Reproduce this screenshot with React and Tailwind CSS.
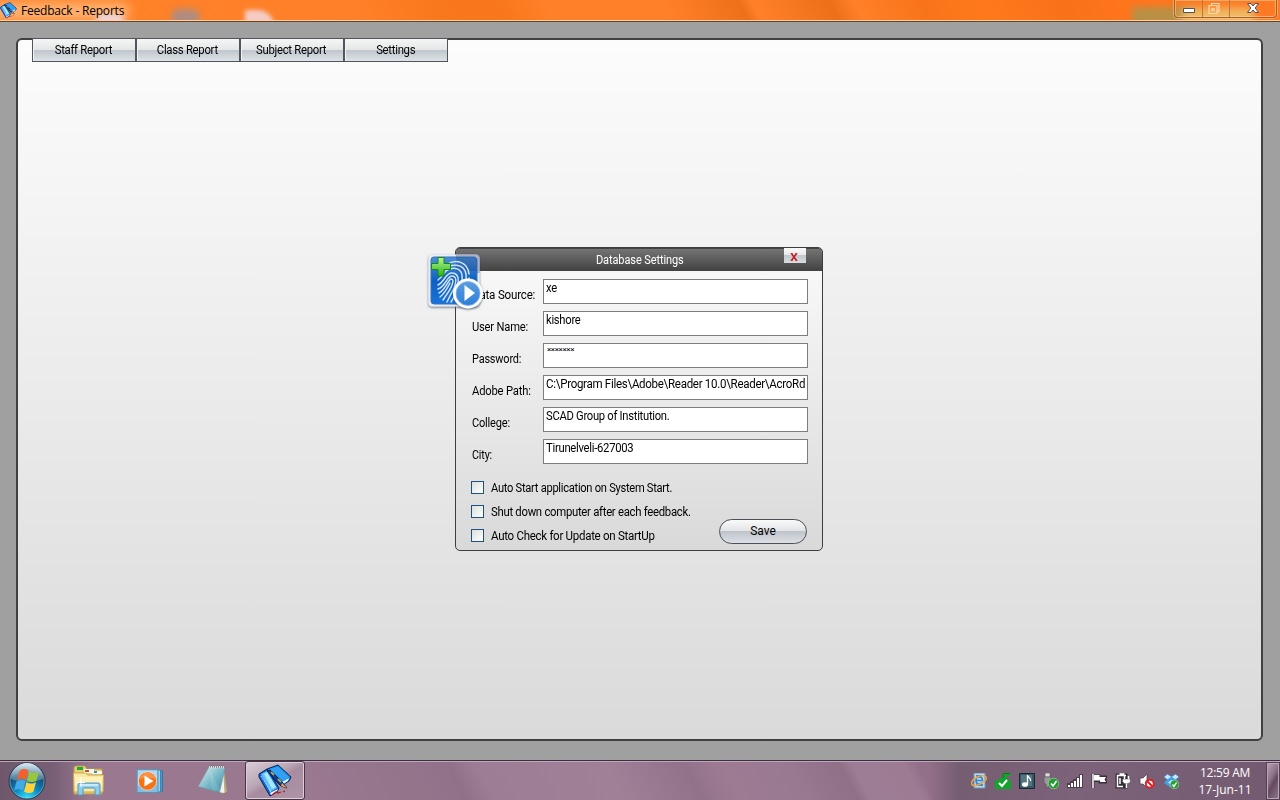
import React from "react";

const tabs = ["Staff Report", "Class Report", "Subject Report", "Settings"];

const fields = [
  { label: "Data Source:", value: "xe", labelFit: "scale-x-[0.965]", fit: "scale-x-[0.935]" },
  { label: "User Name:", value: "kishore", labelFit: "scale-x-[0.93]", fit: "scale-x-[0.935]" },
  { label: "Password:", value: "×××××××", secret: true, labelFit: "scale-x-[0.91]" },
  { label: "Adobe Path:", value: "C:\\Program Files\\Adobe\\Reader 10.0\\Reader\\AcroRd", labelFit: "scale-x-[0.935]", fit: "scale-x-[0.96]" },
  { label: "College:", value: "SCAD Group of Institution.", labelFit: "scale-x-[0.92]", fit: "scale-x-[0.935]" },
  { label: "City:", value: "Tirunelveli-627003", labelFit: "scale-x-[0.9]", fit: "scale-x-[0.94]" },
];

const options = [
  { text: "Auto Start application on System Start.", fit: "scale-x-[0.927]" },
  { text: "Shut down computer after each feedback.", fit: "scale-x-[0.945]" },
  { text: "Auto Check for Update on StartUp", fit: "scale-x-[0.96]" },
];

function BooksIcon({ className }) {
  return (
    <svg className={className} viewBox="0 0 34 34">
      <path d="M9 5 20 1 33 13 31 17 23 22 9 9z" fill="#1688e8" stroke="#06245c" strokeWidth="1" />
      <path d="M12 5 20 2.500 31 13 25 17z" fill="#2fa2f6" />
      <path d="M22 19 31 14 30 17 24 21z" fill="#d8f0ff" />
      <path d="M1 10 9 5 21 24 19 28 12 32 1 13z" fill="#1268d4" stroke="#06245c" strokeWidth="1" />
      <path d="M3 10 9 7 19 24 12 28z" fill="#5fc0fb" />
      <path d="M6 10 9 8 18 23 14 25z" fill="#a9e5ff" />
      <path d="m3 12 10 16" stroke="#d9f4ff" strokeWidth="1" strokeDasharray="1 1" />
      <path d="M12 29 20 25 19 27 13 31z" fill="#fff" />
      <path d="m9 7 3-1 13 13 4 5-6-2z" fill="#124282" stroke="#04173c" strokeWidth=".8" />
      <path d="m13 8 3 3M20 15l3 3" stroke="#e5b343" strokeWidth="1.500" />
      <path d="m24 19 5 5-6-2z" fill="#e9a15d" />
      <path d="m14 31 4-3 2 1 3-1M25 28l2-1" stroke="#ae202c" strokeWidth="1.200" fill="none" />
    </svg>
  );
}

function FingerprintIcon() {
  return (
    <svg className="absolute -left-[31px] top-[3px] h-[62px] w-[62px]" viewBox="0 0 62 62">
      <defs>
        <linearGradient id="fpBlue" x1="0" y1="0" x2="0" y2="1">
          <stop offset="0" stopColor="#4d8fd8" />
          <stop offset=".5" stopColor="#0d5fc2" />
          <stop offset="1" stopColor="#1774dc" />
        </linearGradient>
        <linearGradient id="fpPlus" x1="0" y1="0" x2="0" y2="1">
          <stop offset="0" stopColor="#b9f59a" />
          <stop offset="1" stopColor="#29b40d" />
        </linearGradient>
        <linearGradient id="fpPlay" x1="0" y1="0" x2="0" y2="1">
          <stop offset="0" stopColor="#5a9ce0" />
          <stop offset="1" stopColor="#2e7fd8" />
        </linearGradient>
        <filter id="fpShadow" x="-20%" y="-20%" width="140%" height="140%">
          <feDropShadow dx="0" dy="1" stdDeviation="1.300" floodColor="#304058" floodOpacity=".75" />
        </filter>
      </defs>
      <rect x="3.500" y="3.500" width="51" height="52" rx="4" fill="#e9edf8" filter="url(#fpShadow)" />
      <path d="M31 3.500h20q3.500 0 3.500 3.500v15H52V6H31z" fill="#8088a0" opacity=".6" />
      <rect x="6" y="6" width="46" height="47" rx="3" fill="url(#fpBlue)" stroke="#3772b8" />
      <path d="M31 6h18q3 0 3 3v11H31z" fill="#1a3b70" opacity=".3" />
      <g fill="none" stroke="#cfe2f8" strokeWidth="1.500" strokeLinecap="round">
        <path d="M23 13c8-5 20-2 21 10" />
        <path d="M20 19c5-7 19-7 21 4 1 7-1 14-4 22" />
        <path d="M13 29c4-3 5-6 8-9 6-5 15-3 16 4 1 8-1 15-5 24" />
        <path d="M13 34c7-3 7-12 14-12 9 0 7 12 2 24l-3 5" />
        <path d="M13 38c8-3 9-13 14-13 7 0 3 12-1 18l-4 8" />
        <path d="M14 42c7-4 9-13 12-14 4 0 1 7-2 12l-6 9" />
        <path d="M15 46c4-3 7-8 10-14M44 27c0 4-1 6-1 9" />
      </g>
      <path d="M13 6.500h6v6h6.500v6H19v6.500h-6V18.500H6.500v-6H13z" fill="url(#fpPlus)" stroke="#168a17" />
      <circle cx="43" cy="42.500" r="15" fill="#fff" filter="url(#fpShadow)" />
      <circle cx="43" cy="42.500" r="12" fill="url(#fpPlay)" stroke="#8ab9ea" strokeWidth=".8" />
      <path d="M39.500 34v16L50 42z" fill="#fff" />
    </svg>
  );
}

function StartOrb() {
  return (
    <svg className="h-[38px] w-[38px]" viewBox="0 0 38 38">
      <defs>
        <radialGradient id="orb" cx=".5" cy="1" r=".95">
          <stop offset="0" stopColor="#36e6ff" />
          <stop offset=".4" stopColor="#0b87c0" />
          <stop offset=".75" stopColor="#164a72" />
          <stop offset="1" stopColor="#6f9db8" />
        </radialGradient>
        <linearGradient id="orbShine" x1="0" y1="0" x2="0" y2="1">
          <stop offset="0" stopColor="#e4f2f8" stopOpacity=".9" />
          <stop offset="1" stopColor="#7fa2b8" stopOpacity=".45" />
        </linearGradient>
      </defs>
      <circle cx="19" cy="19" r="18" fill="url(#orb)" stroke="#25374f" />
      <circle cx="19" cy="19" r="17" fill="none" stroke="#9fc5d6" strokeWidth=".8" opacity=".7" />
      <path d="M3 17a16 16 0 0 1 32 0c-9 4-23 4-32 0z" fill="url(#orbShine)" />
      <path d="M11.500 9c3-2.500 6-2.500 9-.5L18 18c-3-2-6-2-9 0z" fill="#f2602b" />
      <path d="M21.500 9.500c3 2 6 2 9.500 0L28.500 18.500c-3 2-6.500 2-9.500 0z" fill="#96c83c" />
      <path d="M8.500 19.500c3-2 6-2 9 0L15 28.500c-3-2-6-2-9 0z" fill="#43a9e8" />
      <path d="M18.500 20c3 2 6.500 2 9.500 0L25.500 29.500c-3 2-6.500 2-9.500 0z" fill="#ffd23c" />
    </svg>
  );
}

function ExplorerIcon() {
  return (
    <svg className="h-[32px] w-[34px]" viewBox="0 0 34 32">
      <path d="M2 3q0-2 2-2h9l2 3h15v25H2z" fill="#e8cd70" stroke="#b99b48" />
      <path d="M5 2h6v3H5z" fill="#20a83c" />
      <path d="M12 4h10v4H12z" fill="#f7f7ef" /><path d="M13 5h4v2h-4z" fill="#d94830" />
      <path d="M20 6h10v3H20z" fill="#f7f7ef" /><path d="M22 6h3v2h-3z" fill="#2c8bd0" />
      <path d="M1.500 8h12l2 2h16L31 27H2z" fill="#f8e9a4" stroke="#c7a957" />
      <path d="M3 12h27v9H3z" fill="#fff6c8" opacity=".6" />
      <path d="M6 30V20q0-2 2-2h18q2 0 2 2v10h-5v-6q0-1-2-1h-8q-2 0-2 1v6z" fill="#8fcdec" stroke="#5395bd" />
      <path d="M8 20h18" stroke="#dff5ff" strokeWidth="1.500" />
      <path d="M9 13v9M5 17.500h8" stroke="#fff" />
    </svg>
  );
}

function PlayerIcon() {
  return (
    <svg className="h-[28px] w-[30px]" viewBox="0 0 30 28">
      <path d="M22 4h4.500v20H22z" fill="#4a9bcd" stroke="#2b79a9" />
      <path d="M20 3h4.500v22H20z" fill="#9bd1ee" stroke="#3b86b2" />
      <path d="M1 2.500h21V25.500H1z" fill="#83bde0" stroke="#5894b8" />
      <path d="M2 3.500h19v7L2 19z" fill="#c3e0f2" opacity=".75" />
      <circle cx="11.500" cy="14" r="9.200" fill="#f27419" stroke="#fff" strokeOpacity=".5" />
      <path d="M3.500 12a8.200 8.200 0 0 1 16 0q-7-3-16 0z" fill="#ffa667" opacity=".6" />
      <path d="M8.500 8.500v11l9-5.500z" fill="#fff" />
    </svg>
  );
}

function NotepadIcon() {
  return (
    <svg className="h-[32px] w-[32px]" viewBox="0 0 32 32">
      <defs>
        <linearGradient id="pad" x1="0" y1="0" x2="1" y2="1">
          <stop offset="0" stopColor="#e3f5f7" />
          <stop offset=".55" stopColor="#75b6c6" />
          <stop offset="1" stopColor="#388ba2" />
        </linearGradient>
      </defs>
      <path d="m27 4 3.500 24-6 2-3-5z" fill="#b9a98a" stroke="#8b7d68" strokeWidth=".6" />
      <path d="m26 4 1.500 25-6-1z" fill="#f4f2e8" />
      <path d="M12 3 28 4 22.500 28.500 1 22.500z" fill="url(#pad)" stroke="#73939c" strokeWidth=".6" />
      <path d="m12 4 12 24-9-2z" fill="#e3f5f7" opacity=".15" />
      <path d="M12 3h16" stroke="#ddd" strokeWidth="3" strokeDasharray="1 1" />
      <path d="M12 1.500h16" stroke="#777" strokeWidth="1" strokeDasharray="1 1" />
    </svg>
  );
}

function Tray() {
  return (
    <div className="flex items-center gap-2">
      <svg className="h-4 w-4" viewBox="0 0 16 16">
        <path d="M3 0h11v15H3z" fill="#b5d8ef" stroke="#6c96b8" />
        <path d="M5 2h6v3H5zM5 11h7v2H5z" fill="#4789c9" />
        <path d="M5 7.500h6.500c0-5-6.500-5-6.500 0 0 4 4 4.500 6 2" fill="none" stroke="#3585d1" strokeWidth="1.600" />
        <path d="M1 12C-2 6 12 0 15 4c2 3-7 10-14 8" fill="none" stroke="#efa646" strokeWidth="1.500" />
      </svg>
      <svg className="h-4 w-4" viewBox="0 0 16 16">
        <path d="M0 8 7.500 4.500V0h8v3h-4v2l4.500 3v8H0z" fill="#12a52c" />
        <path d="M8 5V.500h7" fill="none" stroke="#087a1b" />
        <path d="m4 10 3 3 5-6" fill="none" stroke="#fff" strokeWidth="2" />
      </svg>
      <svg className="h-4 w-4" viewBox="0 0 16 16">
        <path d="M.5.5h15v15H.500z" fill="#385763" stroke="#172832" />
        <path d="M2 2h11v11H2z" fill="#527584" />
        <ellipse cx="6" cy="11.500" rx="3" ry="2.300" fill="#fff" />
        <path d="M8.500 11V2c0 2 4 3 3 6" fill="none" stroke="#fff" strokeWidth="1.300" />
      </svg>
      <svg className="h-4 w-4" viewBox="0 0 16 16">
        <path d="M2 0h5v4H2z" fill="#ddd" stroke="#555" strokeWidth=".6" />
        <path d="M1 4h7v5q0 2-2 2v3H3v-3q-2 0-2-2z" fill="#999" stroke="#555" strokeWidth=".6" />
        <circle cx="10.500" cy="10.500" r="5.300" fill="#219c31" stroke="#bcd9b6" strokeWidth=".6" />
        <path d="m8 10.500 2 2.500 3.500-5" fill="none" stroke="#fff" strokeWidth="1.600" />
      </svg>
      <svg className="h-4 w-4" viewBox="0 0 16 16">
        <path d="M0 10h3V8h3V6h3V4h3V1h4v14H0z" fill="#41343f" opacity=".8" />
        <path d="M1 12h2v2H1zM4 10h2v4H4zM7 8h2v6H7zM10 5h2v9h-2zM13 2h2v12h-2z" fill="#fff" />
      </svg>
      <svg className="h-4 w-4" viewBox="0 0 16 16">
        <path d="M2 1v14M3 3h5v1h7l-1.500 3L15 9H9V7.500H3z" fill="#fff" stroke="#3b303a" strokeWidth="3" />
        <path d="M2 1v14" stroke="#fff" strokeWidth="1.500" />
        <path d="M3 2h5.500v2H15l-1.500 2.500L15 9H9V7.500H3z" fill="#fff" />
      </svg>
      <svg className="h-4 w-4" viewBox="0 0 16 16">
        <path d="M2 2h9v12H2z" fill="#352d35" stroke="#352d35" strokeWidth="3" />
        <path d="M11 2.500H2.500v11H8M4.500 1h5" fill="none" stroke="#fff" strokeWidth="1.500" />
        <path d="M5 5v6" stroke="#fff" strokeWidth="1.500" />
        <path d="M7.500 6h8v2.500q-1 2.500-4 2.500t-4-2.500z" fill="#fff" stroke="#352d35" strokeWidth=".5" />
        <path d="M9.500 3v3M13.500 3v3M11.500 11v4" stroke="#fff" strokeWidth="1.500" />
      </svg>
      <svg className="h-4 w-4" viewBox="0 0 16 16">
        <path d="M1 5h3l4-4v14l-4-4H1z" fill="#fff" stroke="#554650" strokeWidth=".8" />
        <circle cx="10.800" cy="10.800" r="4" fill="#fff" stroke="#df2025" strokeWidth="2" />
        <path d="m8 8 5.500 5.500" stroke="#df2025" strokeWidth="2" />
      </svg>
      <svg className="h-4 w-4" viewBox="0 0 16 16">
        <path d="m4.500 1 4 2.500 4-2.500L16 4l-3 2.500L16 9l-7.500 6L1 10l3-3.500L.500 4z" fill="#3fa3e6" />
        <path d="m4.500 1.500 3.500 2.500-3.500 2.300L1.500 4zM12.500 1.500l-3.500 2.500 3.500 2.300L15.500 4zM8.500 7l-3.500 2.500 3.500 2.200 3.500-2.200z" fill="#c7eaff" />
        <circle cx="11.500" cy="11.500" r="4.300" fill="#289b32" stroke="#b7dcae" strokeWidth=".6" />
        <path d="m9.500 11.500 1.500 2 2.500-4" fill="none" stroke="#fff" strokeWidth="1.400" />
      </svg>
    </div>
  );
}

function TitleBar() {
  return (
    <header className="relative flex h-[22px] shrink-0 items-start justify-between overflow-hidden border-b border-[#71401f] bg-[linear-gradient(62deg,#ff8128_0%,#ff8028_28%,#f9761a_36%,#f9761a_39%,#ff8028_43%,#ff8028_52%,#ee7018_58%,#ff8028_59%,#ed7018_65%,#ff8028_67%,#f97419_72%,#ff781c_77%,#f97218_83%,#ff751c_88%,#ff7a25_100%)]">
      <div className="absolute left-[-10px] top-[3px] h-4 w-[140px] rounded-full bg-[#ffdcae]/60 blur-[6px]" />
      <div className="absolute left-[96px] top-[14px] h-3 w-7 rounded-full bg-[#f0dff0]/90 blur-[3px]" />
      <div className="absolute left-[171px] top-[9px] h-4 w-[29px] rounded-full bg-[#b08c80] blur-[3px]" />
      <div className="absolute left-[245px] top-[10px] h-4 w-[29px] rounded-tr-full bg-[#f4ccc5] blur-[2px]" />
      <div className="absolute left-[1132px] top-[7px] h-[18px] w-[62px] bg-[#b99045] blur-[3px]" />
      <div className="absolute left-[1182px] top-[8px] h-4 w-[72px] bg-[#efbd68] blur-[4px]" />
      <div className="absolute left-0 top-5 h-px w-full bg-[#ffd2a8]" />
      <div className="relative flex h-[21px] items-center">
        <BooksIcon className="ml-0 h-[17px] w-[17px]" />
        <h1 className="ml-1 whitespace-nowrap font-['Open_Sans','Noto_Sans',sans-serif] text-[12px] leading-[20px] tracking-[-0.2px] text-black">Feedback - Reports</h1>
      </div>
      <div className="relative mr-[3px] flex h-[18px] w-[103px] rounded-b-[4px] border border-t-0 border-[#a4602c] shadow-[inset_0_0_0_1px_#ffd29c88,0_0_0_1px_#ffc68b88]">
        <div className="flex w-[28px] items-center justify-center border-r border-[#b9793c]">
          <svg className="h-[18px] w-3" viewBox="0 0 12 18"><path d="M.5 8.500h11v4H.500z" fill="#fff" stroke="#5a5050" /></svg>
        </div>
        <div className="flex w-[27px] items-center justify-center border-r border-[#b9793c] pr-1">
          <svg className="h-[18px] w-3" viewBox="0 0 12 18"><path d="M3.500 5.500v-2h7.500v8h-2M1 5.500h8v8H1zM4 8.500h2v2H4z" fill="none" stroke="#ffd9ae" strokeWidth="1.200" /></svg>
        </div>
        <div className="flex flex-1 items-center justify-center">
          <svg className="h-[18px] w-3" viewBox="0 0 12 18"><path d="M.5 3.500h3.500L6 6l2-2.500h3.500L8.200 8l3.300 4.500H8L6 10l-2 2.500H.500L3.800 8z" fill="#fff" stroke="#5a5058" /></svg>
        </div>
      </div>
    </header>
  );
}

function SettingsDialog() {
  return (
    <section className="absolute left-[455px] top-[225px] h-[304px] w-[368px] rounded-[5px] border border-[#3e3e3e] bg-[linear-gradient(#fafafa,#d9d9d9)]">
      <div className="flex h-[23px] justify-center rounded-t-[4px] border-t border-[#444] bg-[linear-gradient(#747474,#424242)]">
        <h2 className="origin-center scale-x-[0.915] pl-[2px] pt-[3px] text-[12px] leading-4 tracking-[-0.1px] text-white">Database Settings</h2>
      </div>
      <button className="absolute left-[328px] top-0 flex h-[15px] w-[22px] items-center justify-center bg-[linear-gradient(#fafafa_0%,#e5e7ea_48%,#c3c8cf_50%,#d8dce1_100%)]">
        <svg className="mr-[2px] mt-[2px] h-[8px] w-[8px]" viewBox="0 0 8 8"><path d="m1.500.5 5 7M6.500 .500l-5 7" stroke="#c51b1b" strokeWidth="1.600" /><path d="M.500.500h2M5.500 .500h2M.500 7.500h2M5.500 7.500h2" stroke="#c51b1b" strokeWidth=".8" /></svg>
      </button>
      <div className="flex flex-col gap-[7px] pt-2">
        {fields.map((f) => (
          <label key={f.label} className="flex h-[25px] pl-4">
            <span className="w-[71px] shrink-0 whitespace-nowrap pt-2 text-[12px] leading-4">
              <span className={`block w-max origin-left tracking-[-0.2px] ${f.labelFit}`}>{f.label}</span>
            </span>
            <span className="w-[265px] whitespace-nowrap border border-[#7d7d7d] bg-white pl-[2px]">
              <span className={f.secret
                ? "block w-max pl-px text-[8px] leading-[11px] tracking-[-0.4px]"
                : `block w-max origin-left text-[12px] leading-[16px] tracking-[-0.3px] ${f.fit}`}>{f.value}</span>
            </span>
          </label>
        ))}
      </div>
      <div className="flex justify-between pt-[15px]">
        <div className="flex flex-col gap-2 pl-[15px]">
          {options.map((o) => (
            <label key={o.text} className="flex h-4 items-center gap-[7px] whitespace-nowrap text-[12px] leading-4 tracking-[-0.3px]">
              <span className="h-[13px] w-[13px] border border-[#1c5180] bg-[linear-gradient(135deg,#dcdfdc,#fff)]" />
              <span className={`block origin-left pt-px ${o.fit}`}>{o.text}</span>
            </label>
          ))}
        </div>
        <button className="absolute bottom-[6px] right-[15px] h-[25px] w-[88px] rounded-full border border-[#4c5159] bg-[linear-gradient(#fafafa_0%,#e2e4e6_47%,#bfc4cc_50%,#dde0e5_100%)] pb-px text-[12px] leading-[22px]">Save</button>
      </div>
      <FingerprintIcon />
    </section>
  );
}

export default function App() {
  return (
    <div className="flex h-[800px] w-[1280px] flex-col overflow-hidden bg-[#a0a0a0] font-['Roboto','Liberation_Sans',sans-serif] text-black">
      <TitleBar />
      <main className="relative flex h-[738px] shrink-0 px-4 pb-[19px] pt-4">
        <div className="h-[703px] w-[1247px] rounded-[6px] border-2 border-[#404040] bg-[linear-gradient(#fcfcfc,#dadada)]">
          <nav className="-mt-[2px] ml-[14px] flex">
            {tabs.map((label) => (
              <button key={label} className="flex h-6 w-[104px] justify-center border border-[#4f555d] bg-[linear-gradient(#f6f6f6_0%,#e4e6e7_48%,#bfc6cd_52%,#dfe2e6_100%)] pr-px text-[12px] leading-[22px] tracking-[-0.3px] shadow-[inset_1px_0_0_#f4f4f4]">
                <span className="block scale-x-[0.945]">{label}</span>
              </button>
            ))}
          </nav>
        </div>
        <SettingsDialog />
      </main>
      <footer className="flex h-10 shrink-0 items-center border-t border-[#3e2e40] bg-[linear-gradient(90deg,#6f586c_0%,#775e74_4%,rgba(153,120,144,0)_7%,rgba(117,93,114,0)_72.500%,#755d72_75%,#7d6379_84%,#735a70_100%),linear-gradient(62deg,#997890_25%,#92758b_32%,#91718a_36%,#9d7d95_38%,#9f8097_48%,#92728b_54%,#9d7b93_57%,#9a7992_60%,#997891_62%,#8e7087_66%,#9d7d95_67%,#9c7b93_71%,#937089_72%)] shadow-[inset_0_1px_0_#bca8b8]">
        <div className="ml-2 flex w-[64px] shrink-0"><StartOrb /></div>
        <div className="flex w-[64px] shrink-0"><ExplorerIcon /></div>
        <div className="flex w-[61px] shrink-0"><PlayerIcon /></div>
        <div className="flex w-[48px] shrink-0 pb-[2px]"><NotepadIcon /></div>
        <div className="flex h-[39px] w-[60px] shrink-0 items-center justify-center rounded-[3px] border border-[#483343] bg-[linear-gradient(150deg,#d9cdd6_0%,#baa7b5_40%,#a78ca0_52%,#b095a9_100%)] shadow-[inset_0_0_0_1px_#ddcfd9]">
          <BooksIcon className="h-[34px] w-[34px]" />
        </div>
        <div className="ml-auto flex h-full items-center">
          <Tray />
          <div className="ml-[4px] flex w-[83px] flex-col items-center whitespace-nowrap pl-px font-['Open_Sans','Noto_Sans',sans-serif] text-[12px] leading-[17px] tracking-[-0.25px] text-white">
            <time>12:59 AM</time>
            <time className="tracking-[0px]">17-Jun-11</time>
          </div>
          <div className="h-[38px] w-[14px] border border-[#53404f] bg-[linear-gradient(120deg,#b9a4b4_0%,#8c7186_40%,#65495e_55%,#927a8d_100%)] shadow-[inset_0_0_0_1px_#b9a5b5]" />
        </div>
      </footer>
    </div>
  );
}
